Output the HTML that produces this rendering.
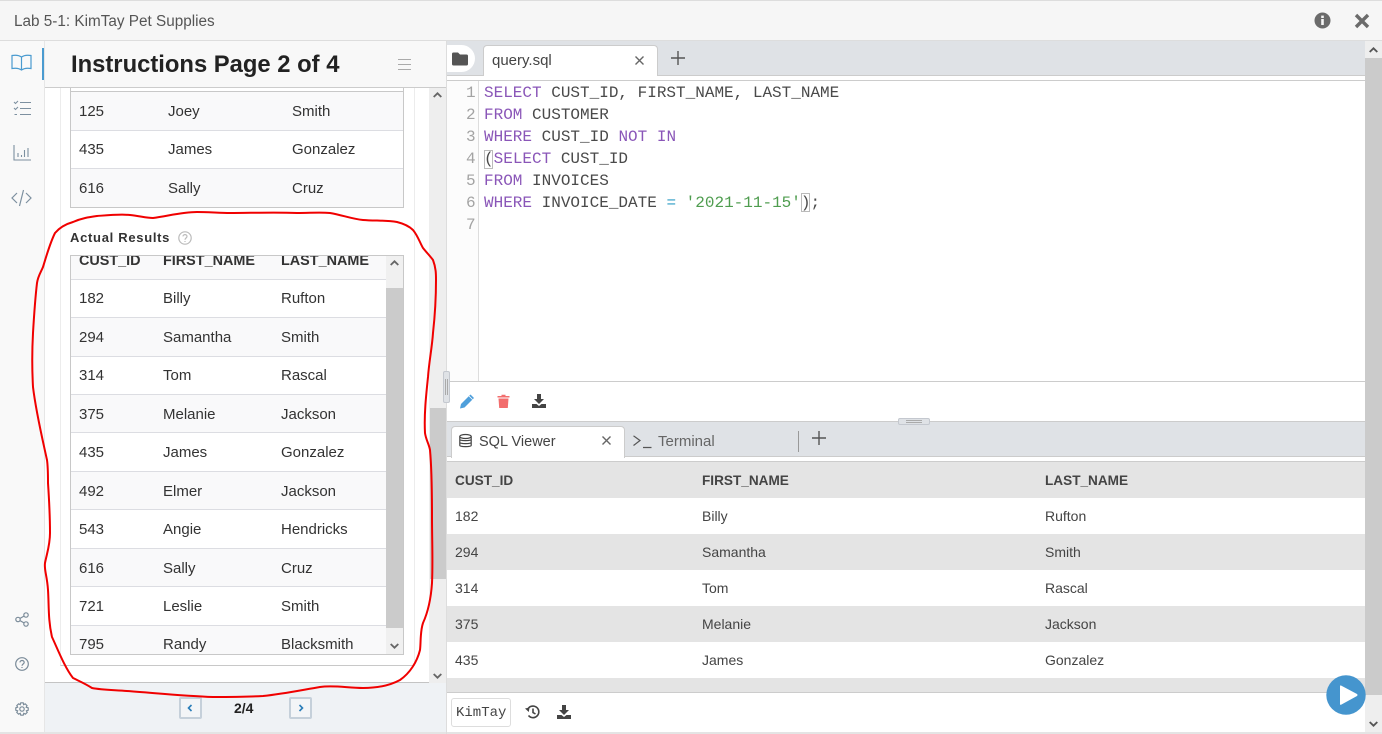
<!DOCTYPE html>
<html><head><meta charset="utf-8"><style>
html,body{margin:0;padding:0;width:1382px;height:734px;overflow:hidden;background:#fff;font-family:"Liberation Sans",sans-serif;color:#333}
.a{position:absolute}
.t{position:absolute;white-space:nowrap;line-height:20px}
.cell{font-size:15px;color:#333;margin-top:1px}
.hl{position:absolute;height:1px;background:#dcdde2}
.band{position:absolute;background:#f9f9fa}
.mono{font-family:"Liberation Mono",monospace;font-size:16px;line-height:22px;position:absolute;left:484px;white-space:pre;color:#4a4a4a}
.k{color:#8a56b8}
.ln{font-family:"Liberation Mono",monospace;font-size:16px;line-height:22px;position:absolute;left:466px;color:#a3a3a3}
.sv{font-size:14px;color:#444}
.svh{font-size:13.6px;font-weight:bold;color:#444}
svg{position:absolute;overflow:visible}
</style></head><body>
<!-- top bar -->
<div class="a" style="left:0;top:0;width:1382px;height:41px;background:#f6f6f6;border-top:1px solid #ddd;box-sizing:border-box;border-bottom:1px solid #ddd"></div>
<div class="t" style="left:14px;top:12px;font-size:15.3px;color:#555">Lab 5-1: KimTay Pet Supplies</div>
<svg style="left:1314px;top:12px" width="17" height="17" viewBox="0 0 17 17"><circle cx="8.5" cy="8.5" r="8" fill="#6b6b6b"/><rect x="7.2" y="7" width="2.6" height="6" fill="#f6f6f6"/><rect x="7.2" y="3.6" width="2.6" height="2.4" fill="#f6f6f6"/></svg>
<svg style="left:1354px;top:13px" width="16" height="16" viewBox="0 0 16 16"><path d="M2 2L14 14M14 2L2 14" stroke="#6b6b6b" stroke-width="3.4"/></svg>
<!-- left rail -->
<div class="a" style="left:0;top:41px;width:45px;height:693px;background:#f9f9f9;border-right:1px solid #e6e6e6;box-sizing:border-box"></div>
<div class="a" style="left:42px;top:48px;width:2px;height:32px;background:#4a9bd0"></div>
<svg style="left:11px;top:54px" width="21" height="17" viewBox="0 0 21 17" fill="none" stroke="#4a9bd0" stroke-width="1.2"><path d="M10.5 3C8 1.2 4 1 1 1.5V14.5C4 14 8 14.2 10.5 16C13 14.2 17 14 20 14.5V1.5C17 1 13 1.2 10.5 3V16"/></svg>
<svg style="left:13px;top:100px" width="19" height="16" viewBox="0 0 19 16" fill="none" stroke="#7d90a0" stroke-width="1.1"><path d="M1 2L2.5 3.5L5 1M1 8L2.5 9.5L5 7M7 2.5H18M7 8.5H18M7 14.5H18M1.5 14.5H4"/></svg>
<svg style="left:13px;top:145px" width="19" height="16" viewBox="0 0 19 16" fill="none" stroke="#7d90a0" stroke-width="1.1"><path d="M1 0V15H18M5 8V12M8.5 10V12M11.5 5V12M15 3V12"/></svg>
<svg style="left:11px;top:189px" width="21" height="18" viewBox="0 0 21 18" fill="none" stroke="#7d90a0" stroke-width="1.2"><path d="M6 4L1 9L6 14M15 4L20 9L15 14M12.5 1L8.5 17"/></svg>
<svg style="left:15px;top:612px" width="14" height="15" viewBox="0 0 14 15" fill="none" stroke="#7a8b99" stroke-width="1.2"><circle cx="3" cy="7.5" r="2.2"/><circle cx="11" cy="3" r="2.2"/><circle cx="11" cy="12" r="2.2"/><path d="M5 6.4L9 4.1M5 8.6L9 10.9"/></svg>
<svg style="left:15px;top:657px" width="14" height="14" viewBox="0 0 14 14" fill="none" stroke="#7a8b99" stroke-width="1.2"><circle cx="7" cy="7" r="6.3"/><path d="M5 5.4C5 2.8 9.2 3 9.2 5.4C9.2 7 7 7 7 8.8M7 10V11"/></svg>
<svg style="left:15px;top:702px" width="14" height="14" viewBox="0 0 14 14" fill="none" stroke="#7a8b99" stroke-width="1.2"><circle cx="7" cy="7" r="2.2"/><path d="M5.8 .8H8.2L8.6 2.6L10.2 1.8L12 3.6L11.2 5.2L13.2 5.8V8.2L11.4 8.8L12.2 10.4L10.4 12.2L8.8 11.4L8.2 13.2H5.8L5.2 11.4L3.6 12.2L1.8 10.4L2.6 8.8L.8 8.2V5.8L2.6 5.2L1.8 3.6L3.6 1.8L5.2 2.6Z"/></svg>
<!-- instructions content -->
<div class="a" style="left:45px;top:88px;width:384px;height:595px;background:#fff;border-bottom:1px solid #c4c4c4;box-sizing:border-box"></div>
<div class="a" style="left:60px;top:88px;width:355px;height:578px;background:#fff;border:1px solid #ececec;border-top:0;border-bottom:1px solid #c8c8c8;box-sizing:border-box"></div>
<!-- expected table -->
<div class="a" style="left:70px;top:88px;width:334px;height:120px;border:1px solid #c8c8c8;box-sizing:border-box;background:#fff;border-top:0"></div>
<div class="band" style="left:71px;top:92px;width:332px;height:38px"></div>
<div class="band" style="left:71px;top:169px;width:332px;height:38px"></div>
<div class="hl" style="left:71px;top:91px;width:332px;background:#c8c8c8"></div>
<div class="hl" style="left:71px;top:130px;width:332px"></div>
<div class="hl" style="left:71px;top:168px;width:332px"></div>
<div class="t cell" style="left:79px;top:101px">125</div><div class="t cell" style="left:168px;top:101px">Joey</div><div class="t cell" style="left:292px;top:101px">Smith</div>
<div class="t cell" style="left:79px;top:139px">435</div><div class="t cell" style="left:168px;top:139px">James</div><div class="t cell" style="left:292px;top:139px">Gonzalez</div>
<div class="t cell" style="left:79px;top:178px">616</div><div class="t cell" style="left:168px;top:178px">Sally</div><div class="t cell" style="left:292px;top:178px">Cruz</div>
<!-- actual results -->
<div class="t" style="left:70px;top:228px;font-size:13px;font-weight:bold;color:#333;letter-spacing:.7px">Actual Results</div>
<svg style="left:178px;top:231px" width="14" height="14" viewBox="0 0 14 14" fill="none" stroke="#bbb" stroke-width="1.2"><circle cx="7" cy="7" r="6.2"/><path d="M5 5.4C5 3 9 3 9 5.4C9 7 7 7 7 8.8M7 10V11"/></svg>
<div class="a" style="left:70px;top:255px;width:334px;height:400px;border:1px solid #c8c8c8;box-sizing:border-box;background:#fff"></div>
<div class="band" style="left:71px;top:256px;width:315px;height:23px"></div>
<div class="t" style="left:79px;top:251px;font-size:14.4px;font-weight:bold;color:#333;clip-path:inset(5px 0 0 0)">CUST_ID</div>
<div class="t" style="left:163px;top:251px;font-size:14.4px;font-weight:bold;color:#333;clip-path:inset(5px 0 0 0)">FIRST_NAME</div>
<div class="t" style="left:281px;top:251px;font-size:14.4px;font-weight:bold;color:#333;clip-path:inset(5px 0 0 0)">LAST_NAME</div>
<div class="band" style="left:71px;top:318px;width:315px;height:38px"></div>
<div class="band" style="left:71px;top:395px;width:315px;height:37px"></div>
<div class="band" style="left:71px;top:472px;width:315px;height:37px"></div>
<div class="band" style="left:71px;top:549px;width:315px;height:37px"></div>
<div class="band" style="left:71px;top:626px;width:315px;height:28px"></div>
<div class="hl" style="left:71px;top:279px;width:315px"></div><div class="hl" style="left:71px;top:317px;width:315px"></div><div class="hl" style="left:71px;top:356px;width:315px"></div><div class="hl" style="left:71px;top:394px;width:315px"></div><div class="hl" style="left:71px;top:432px;width:315px"></div><div class="hl" style="left:71px;top:471px;width:315px"></div><div class="hl" style="left:71px;top:509px;width:315px"></div><div class="hl" style="left:71px;top:548px;width:315px"></div><div class="hl" style="left:71px;top:586px;width:315px"></div><div class="hl" style="left:71px;top:625px;width:315px"></div>
<div class="t cell" style="left:79px;top:288px">182</div><div class="t cell" style="left:163px;top:288px">Billy</div><div class="t cell" style="left:281px;top:288px">Rufton</div>
<div class="t cell" style="left:79px;top:327px">294</div><div class="t cell" style="left:163px;top:327px">Samantha</div><div class="t cell" style="left:281px;top:327px">Smith</div>
<div class="t cell" style="left:79px;top:365px">314</div><div class="t cell" style="left:163px;top:365px">Tom</div><div class="t cell" style="left:281px;top:365px">Rascal</div>
<div class="t cell" style="left:79px;top:404px">375</div><div class="t cell" style="left:163px;top:404px">Melanie</div><div class="t cell" style="left:281px;top:404px">Jackson</div>
<div class="t cell" style="left:79px;top:442px">435</div><div class="t cell" style="left:163px;top:442px">James</div><div class="t cell" style="left:281px;top:442px">Gonzalez</div>
<div class="t cell" style="left:79px;top:481px">492</div><div class="t cell" style="left:163px;top:481px">Elmer</div><div class="t cell" style="left:281px;top:481px">Jackson</div>
<div class="t cell" style="left:79px;top:519px">543</div><div class="t cell" style="left:163px;top:519px">Angie</div><div class="t cell" style="left:281px;top:519px">Hendricks</div>
<div class="t cell" style="left:79px;top:558px">616</div><div class="t cell" style="left:163px;top:558px">Sally</div><div class="t cell" style="left:281px;top:558px">Cruz</div>
<div class="t cell" style="left:79px;top:596px">721</div><div class="t cell" style="left:163px;top:596px">Leslie</div><div class="t cell" style="left:281px;top:596px">Smith</div>
<div class="t cell" style="left:79px;top:634px">795</div><div class="t cell" style="left:163px;top:634px">Randy</div><div class="t cell" style="left:281px;top:634px">Blacksmith</div>
<!-- inner scrollbar -->
<div class="a" style="left:386px;top:256px;width:17px;height:398px;background:#f0f0f0"></div>
<div class="a" style="left:386px;top:288px;width:17px;height:340px;background:#cbcbcb"></div>
<svg style="left:390px;top:260px" width="9" height="6" viewBox="0 0 9 6" fill="none" stroke="#666" stroke-width="1.8"><path d="M.7 5L4.5 1.3L8.3 5"/></svg>
<svg style="left:390px;top:643px" width="9" height="6" viewBox="0 0 9 6" fill="none" stroke="#666" stroke-width="1.8"><path d="M.7 1L4.5 4.7L8.3 1"/></svg>
<!-- instructions header -->
<div class="a" style="left:45px;top:41px;width:401px;height:47px;background:#f8f8f8;border-bottom:1px solid #ccc;box-sizing:border-box"></div>
<div class="t" style="left:71px;top:51px;font-size:23.8px;line-height:28px;font-weight:bold;color:#222">Instructions Page 2 of 4</div>
<svg style="left:398px;top:59px" width="13" height="11" viewBox="0 0 13 11" stroke="#aaa" stroke-width="1"><path d="M0 .5H13M0 5.5H13M0 10.5H13"/></svg>
<!-- outer scrollbar -->
<div class="a" style="left:429px;top:88px;width:17px;height:595px;background:#eee"></div>
<div class="a" style="left:430px;top:408px;width:16px;height:171px;background:#cbcbcb"></div>
<svg style="left:433px;top:92px" width="9" height="6" viewBox="0 0 9 6" fill="none" stroke="#666" stroke-width="1.8"><path d="M.7 5L4.5 1.3L8.3 5"/></svg>
<svg style="left:433px;top:673px" width="9" height="6" viewBox="0 0 9 6" fill="none" stroke="#666" stroke-width="1.8"><path d="M.7 1L4.5 4.7L8.3 1"/></svg>
<!-- bottom nav -->
<div class="a" style="left:45px;top:683px;width:402px;height:51px;background:#eff2f5"></div>
<div class="a" style="left:179px;top:697px;width:23px;height:22px;border:2px solid #c5d0da;border-radius:2px;box-sizing:border-box;background:#f3f5f7"></div>
<svg style="left:187px;top:704px" width="6" height="8" viewBox="0 0 6 8" fill="none" stroke="#2a7db8" stroke-width="1.6"><path d="M4.5 1L1.5 4L4.5 7"/></svg>
<div class="t" style="left:234px;top:698px;font-size:14px;font-weight:bold;color:#222">2/4</div>
<div class="a" style="left:289px;top:697px;width:23px;height:22px;border:2px solid #c5d0da;border-radius:2px;box-sizing:border-box;background:#f3f5f7"></div>
<svg style="left:298px;top:704px" width="6" height="8" viewBox="0 0 6 8" fill="none" stroke="#2a7db8" stroke-width="1.6"><path d="M1.5 1L4.5 4L1.5 7"/></svg>
<div class="a" style="left:0;top:732px;width:1382px;height:2px;background:#e4e4e4"></div>
<!-- right panel -->
<div class="a" style="left:446px;top:41px;width:1px;height:693px;background:#ddd"></div>
<div class="a" style="left:447px;top:41px;width:919px;height:34px;background:#dfe2e6"></div>
<div class="a" style="left:447px;top:75px;width:919px;height:1px;background:#ccc"></div>
<div class="a" style="left:447px;top:80px;width:919px;height:1px;background:#ccc"></div>
<div class="a" style="left:447px;top:45px;width:28px;height:27px;background:#fff;border-radius:0 14px 14px 0"></div>
<svg style="left:452px;top:52px" width="16" height="14" viewBox="0 0 16 14"><path d="M0 2Q0 .5 1.5 .5H6L8 2.5H14.5Q16 2.5 16 4V12Q16 13.5 14.5 13.5H1.5Q0 13.5 0 12Z" fill="#555"/></svg>
<div class="a" style="left:483px;top:45px;width:175px;height:31px;background:#fff;border:1px solid #ccc;border-bottom:0;border-radius:4px 4px 0 0;box-sizing:border-box"></div>
<div class="t" style="left:492px;top:51px;font-size:15px;color:#444">query.sql</div>
<svg style="left:635px;top:56px" width="9" height="9" viewBox="0 0 9 9" stroke="#666" stroke-width="1.4"><path d="M.5 .5L8.5 8.5M8.5 .5L.5 8.5"/></svg>
<svg style="left:671px;top:51px" width="14" height="14" viewBox="0 0 14 14" stroke="#555" stroke-width="1.4"><path d="M7 0V14M0 7H14"/></svg>
<!-- editor -->
<div class="a" style="left:447px;top:81px;width:31px;height:300px;background:#fcfcfc"></div>
<div class="a" style="left:478px;top:81px;width:1px;height:300px;background:#ddd"></div>
<div class="ln" style="top:82px">1</div><div class="ln" style="top:104px">2</div><div class="ln" style="top:126px">3</div><div class="ln" style="top:148px">4</div><div class="ln" style="top:170px">5</div><div class="ln" style="top:192px">6</div><div class="ln" style="top:214px">7</div>
<div class="mono" style="top:82px"><span class="k">SELECT</span> CUST_ID, FIRST_NAME, LAST_NAME</div>
<div class="mono" style="top:104px"><span class="k">FROM</span> CUSTOMER</div>
<div class="mono" style="top:126px"><span class="k">WHERE</span> CUST_ID <span class="k">NOT</span> <span class="k">IN</span></div>
<div class="mono" style="top:148px">(<span class="k">SELECT</span> CUST_ID</div>
<div class="mono" style="top:170px"><span class="k">FROM</span> INVOICES</div>
<div class="mono" style="top:192px"><span class="k">WHERE</span> INVOICE_DATE <span style="color:#2c9cc4">=</span> <span style="color:#4f9d4f">'2021-11-15'</span>);</div>
<div class="a" style="left:484px;top:150px;width:9px;height:19px;border:1px solid #bbb;box-sizing:border-box"></div>
<div class="a" style="left:801px;top:193px;width:9px;height:19px;border:1px solid #bbb;box-sizing:border-box"></div>
<div class="a" style="left:447px;top:381px;width:919px;height:1px;background:#ccc"></div>
<!-- editor toolbar -->
<svg style="left:460px;top:393px" width="15" height="16" viewBox="0 0 15 16"><path d="M0 15.5L1 11L10.5 1.5L14 5L4.5 14.5Z" fill="#4f9fdb"/><path d="M9 3L12.5 6.5" stroke="#fff" stroke-width=".8"/></svg>
<svg style="left:497px;top:394px" width="13" height="14" viewBox="0 0 13 14"><path d="M1 2H4.5V.8H8.5V2H12.5V3.5H.5V2ZM1.5 4.5H11.5L10.8 14H2.2Z" fill="#f26d6d"/></svg>
<svg style="left:532px;top:394px" width="14" height="14" viewBox="0 0 14 14" fill="#444"><path d="M5 0H9V5H12L7 10L2 5H5Z"/><path d="M0 10H4.5L7 12L9.5 10H14V14H0Z"/></svg>
<!-- lower tabs -->
<div class="a" style="left:447px;top:421px;width:919px;height:1px;background:#ccc"></div>
<div class="a" style="left:447px;top:422px;width:919px;height:35px;background:#dfe2e6"></div>
<div class="a" style="left:447px;top:456px;width:919px;height:1px;background:#ccc"></div>
<div class="a" style="left:447px;top:461px;width:919px;height:1px;background:#ccc"></div>
<div class="a" style="left:898px;top:418px;width:32px;height:7px;background:#dfe2e6;border:1px solid #c4c8cf;border-radius:2px;box-sizing:border-box"></div>
<div class="a" style="left:906px;top:420px;width:16px;height:1px;background:#aaa"></div><div class="a" style="left:906px;top:422px;width:16px;height:1px;background:#aaa"></div>
<div class="a" style="left:451px;top:426px;width:174px;height:32px;background:#fff;border:1px solid #ccc;border-bottom:0;border-radius:4px 4px 0 0;box-sizing:border-box"></div>
<svg style="left:459px;top:434px" width="13" height="14" viewBox="0 0 13 14" fill="none" stroke="#444" stroke-width="1.2"><ellipse cx="6.5" cy="2.5" rx="5.7" ry="2"/><path d="M.8 2.5V11.5C.8 13 12.2 13 12.2 11.5V2.5M.8 5.5C.8 7 12.2 7 12.2 5.5M.8 8.5C.8 10 12.2 10 12.2 8.5"/></svg>
<div class="t" style="left:479px;top:432px;font-size:14.5px;color:#444">SQL Viewer</div>
<svg style="left:602px;top:436px" width="9" height="9" viewBox="0 0 9 9" stroke="#666" stroke-width="1.4"><path d="M.5 .5L8.5 8.5M8.5 .5L.5 8.5"/></svg>
<svg style="left:633px;top:435px" width="19" height="13" viewBox="0 0 19 13" fill="none" stroke="#555" stroke-width="1.2"><path d="M.5 .8L7 5.5L.5 10.5M10 12.5H18.5"/></svg>
<div class="t" style="left:658px;top:432px;font-size:15px;color:#666">Terminal</div>
<div class="a" style="left:798px;top:431px;width:1px;height:21px;background:#999"></div>
<svg style="left:812px;top:431px" width="14" height="14" viewBox="0 0 14 14" stroke="#555" stroke-width="1.4"><path d="M7 0V14M0 7H14"/></svg>
<!-- sql viewer table -->
<div class="a" style="left:447px;top:462px;width:919px;height:36px;background:#e4e4e4"></div>
<div class="a" style="left:447px;top:534px;width:919px;height:36px;background:#e4e4e4"></div>
<div class="a" style="left:447px;top:606px;width:919px;height:36px;background:#e4e4e4"></div>
<div class="a" style="left:447px;top:678px;width:919px;height:14px;background:#e4e4e4"></div>
<div class="t svh" style="left:455px;top:471px">CUST_ID</div><div class="t svh" style="left:702px;top:471px">FIRST_NAME</div><div class="t svh" style="left:1045px;top:471px">LAST_NAME</div>
<div class="t sv" style="left:455px;top:506px">182</div><div class="t sv" style="left:702px;top:506px">Billy</div><div class="t sv" style="left:1045px;top:506px">Rufton</div>
<div class="t sv" style="left:455px;top:542px">294</div><div class="t sv" style="left:702px;top:542px">Samantha</div><div class="t sv" style="left:1045px;top:542px">Smith</div>
<div class="t sv" style="left:455px;top:578px">314</div><div class="t sv" style="left:702px;top:578px">Tom</div><div class="t sv" style="left:1045px;top:578px">Rascal</div>
<div class="t sv" style="left:455px;top:614px">375</div><div class="t sv" style="left:702px;top:614px">Melanie</div><div class="t sv" style="left:1045px;top:614px">Jackson</div>
<div class="t sv" style="left:455px;top:650px">435</div><div class="t sv" style="left:702px;top:650px">James</div><div class="t sv" style="left:1045px;top:650px">Gonzalez</div>
<!-- bottom toolbar -->
<div class="a" style="left:447px;top:692px;width:919px;height:1px;background:#ccc"></div>
<div class="a" style="left:451px;top:698px;width:60px;height:29px;background:#fff;border:1px solid #ddd;border-radius:3px;box-sizing:border-box"></div>
<div class="t" style="left:456px;top:703px;font-family:'Liberation Mono',monospace;font-size:14px;color:#444">KimTay</div>
<svg style="left:525px;top:705px" width="15" height="14" viewBox="0 0 15 14" fill="none" stroke="#444" stroke-width="1.6"><path d="M2.5 5A5.8 5.8 0 1 1 3.5 10.5M8 3.5V7.5L10.5 9"/><path d="M0 3.5L4.5 2.5L3.8 7Z" fill="#444" stroke="none"/></svg>
<svg style="left:557px;top:705px" width="14" height="14" viewBox="0 0 14 14" fill="#444"><path d="M5 0H9V5H12L7 10L2 5H5Z"/><path d="M0 10H4.5L7 12L9.5 10H14V14H0Z"/></svg>
<!-- right scrollbar -->
<div class="a" style="left:1365px;top:41px;width:17px;height:691px;background:#eee"></div>
<div class="a" style="left:1365px;top:58px;width:17px;height:637px;background:#cbcbcb"></div>
<svg style="left:1369px;top:47px" width="9" height="6" viewBox="0 0 9 6" fill="none" stroke="#555" stroke-width="1.8"><path d="M.7 5L4.5 1.3L8.3 5"/></svg>
<svg style="left:1369px;top:721px" width="9" height="6" viewBox="0 0 9 6" fill="none" stroke="#555" stroke-width="1.8"><path d="M.7 1L4.5 4.7L8.3 1"/></svg>
<!-- run -->
<svg style="left:1326px;top:675px" width="40" height="40" viewBox="0 0 40 40"><circle cx="20" cy="20" r="19.7" fill="#4595ce"/><path d="M15 10.5Q14 10 14 11.5V29Q14 30.5 15.5 29.5L31 21Q32 20 31 19Z" fill="#fff"/></svg>
<!-- vertical splitter -->
<div class="a" style="left:443px;top:371px;width:7px;height:32px;background:#dfe2e6;border:1px solid #c4c8cf;border-radius:2px;box-sizing:border-box"></div>
<div class="a" style="left:445px;top:379px;width:1px;height:16px;background:#aaa"></div><div class="a" style="left:447px;top:379px;width:1px;height:16px;background:#aaa"></div>
<!-- red annotation -->
<svg style="left:0;top:0" width="1382" height="734" viewBox="0 0 1382 734" fill="none"><path d="M73 222C82 218 90 217 97 216C110 215 120 214 130 215C140 216 146 218 153 218C168 216 182 212 197 212C208 212 220 213 230 213C250 213 275 212 297 213C310 213 320 212 330 213C342 215 352 219 363 220C375 221 386 220 397 222C405 224 410 227 413 230C418 236 420 243 423 248C427 253 430 256 433 260C436 268 436 274 436 280C436 298 435 315 433 333C432 348 429 362 428 377C426 396 424 415 425 433C426 440 429 444 430 450C432 472 432 495 432 517C432 540 433 562 432 583C431 598 428 612 423 623C420 632 421 642 420 650C417 662 410 673 400 680C389 686 376 688 363 688C348 688 334 685 320 687C302 690 283 694 263 696C246 697 230 697 213 697C185 696 155 693 127 691C115 690 102 690 92 688C86 684 79 681 73 678C65 668 58 650 52 637C48 620 49 605 48 590C47 575 44 570 45 563C47 553 50 545 50 533C50 515 49 498 48 483C48 475 48 467 47 460C42 437 36 412 33 387C32 369 32 351 33 333C34 316 35 300 37 283C38 276 41 272 43 267C47 254 50 243 55 233C60 227 66 224 73 222Z" stroke="#f00000" stroke-width="2"/></svg>
</body></html>
